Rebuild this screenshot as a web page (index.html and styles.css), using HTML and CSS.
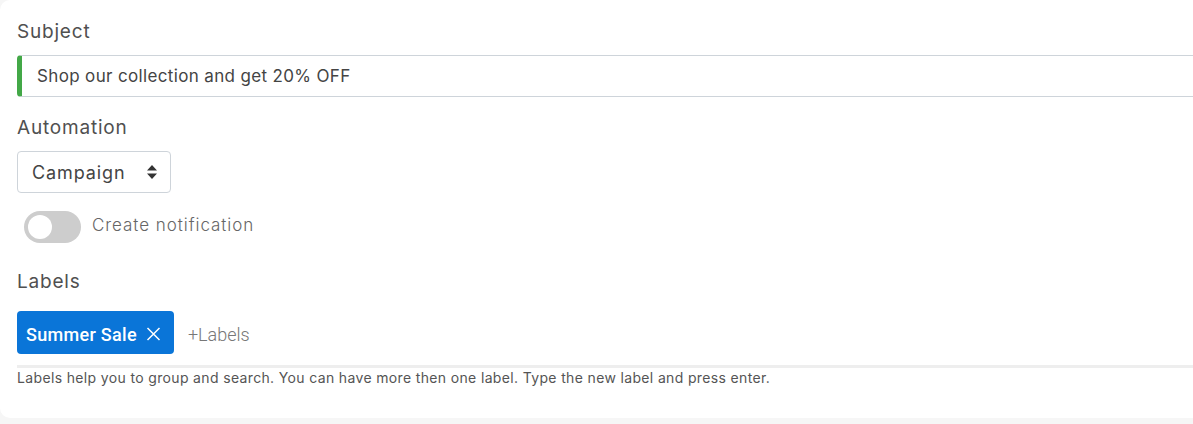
FILE: index.html
```html
<!DOCTYPE html>
<html>
<head>
<meta charset="utf-8">
<link rel="stylesheet" href="styles.css">
</head>
<body>
<div class="card">
  <div class="field">
    <div class="label">Subject</div>
    <div class="input">Shop our collection and get 20% OFF</div>
  </div>
  <div class="field">
    <div class="label">Automation</div>
    <div class="select">
      <span>Campaign</span>
      <svg class="caret" width="10" height="16" viewBox="0 0 10 16"><path d="M5 1 L10 6.5 L0 6.5 Z M0 9.5 L10 9.5 L5 15 Z" fill="#333"/></svg>
    </div>
  </div>
  <div class="toggle-row">
    <div class="toggle"><div class="knob"></div></div>
    <span class="toggle-text">Create notification</span>
  </div>
  <div class="field">
    <div class="label">Labels</div>
    <div class="tags">
      <span class="chip">Summer Sale
        <svg width="15" height="14" viewBox="0 0 15 14"><path d="M1.5 1 L13.5 13 M13.5 1 L1.5 13" stroke="#fff" stroke-width="1.5"/></svg>
      </span>
      <span class="add">+Labels</span>
    </div>
    <div class="rule"></div>
    <div class="help">Labels help you to group and search. You can have more then one label. Type the new label and press enter.</div>
  </div>
</div>
</body>
</html>
```
FILE: styles.css
```css
html, body { margin: 0; padding: 0; }
body {
  background: #f6f6f6;
  overflow: hidden;
  width: 1193px;
  height: 424px;
  font-family: "Inter", "Noto Sans", sans-serif;
}
.card {
  background: #fff;
  width: 1230px;
  height: 418px;
  border-radius: 10px;
  box-sizing: border-box;
  padding: 18px 0 0 17px;
  display: flex;
  flex-direction: column;
}
.label {
  font-size: 19px;
  line-height: 28px;
  color: #505050;
  letter-spacing: 0.8px;
}
.input {
  margin-top: 9px;
  height: 42px;
  box-sizing: border-box;
  border: 1px solid #ced4da;
  border-left: 5px solid #43a847;
  border-radius: 4px 0 0 4px;
  padding-left: 15px;
  display: flex;
  align-items: center;
  font-size: 17px;
  letter-spacing: 0.35px;
  color: #444;
}
.field + .field { margin-top: 17px; }
.select {
  margin-top: 9px;
  width: 154px;
  height: 42px;
  box-sizing: border-box;
  border: 1px solid #ced4da;
  border-radius: 4px;
  display: flex;
  align-items: center;
  justify-content: space-between;
  padding: 0 13px 0 14px;
  font-size: 18px;
  letter-spacing: 0.9px;
  color: #444;
}
.toggle-row {
  margin-top: 18px;
  margin-left: 7px;
  display: flex;
  align-items: center;
  gap: 11px;
}
.toggle {
  width: 57px;
  height: 32px;
  border-radius: 16px;
  background: #cdcdcd;
  display: flex;
  align-items: center;
  padding-left: 4px;
  box-sizing: border-box;
}
.knob {
  width: 24px;
  height: 24px;
  border-radius: 50%;
  background: #fff;
}
.toggle-text {
  font-size: 17px;
  font-weight: 300;
  letter-spacing: 0.95px;
  color: #666;
  margin-bottom: 4px;
}
.toggle-row + .field { margin-top: 25px; }
.tags {
  margin-top: 15px;
  display: flex;
  align-items: center;
  gap: 14px;
}
.chip {
  height: 43px;
  box-sizing: border-box;
  background: #0a75d8;
  border-radius: 4px;
  color: #fff;
  font-family: "Roboto", sans-serif;
  font-weight: 500;
  font-size: 18px;
  letter-spacing: 0.3px;
  display: inline-flex;
  align-items: center;
  gap: 9px;
  padding: 3px 13px 0 9px;
}
.add {
  font-family: "Roboto", sans-serif;
  font-weight: 300;
  font-size: 18px;
  color: #777;
  padding-top: 3px;
}
.rule {
  margin-top: 11px;
  height: 3px;
  background: #eee;
}
.help {
  margin-top: 1px;
  font-size: 14px;
  line-height: 18px;
  letter-spacing: 0.35px;
  color: #555;
}
```
